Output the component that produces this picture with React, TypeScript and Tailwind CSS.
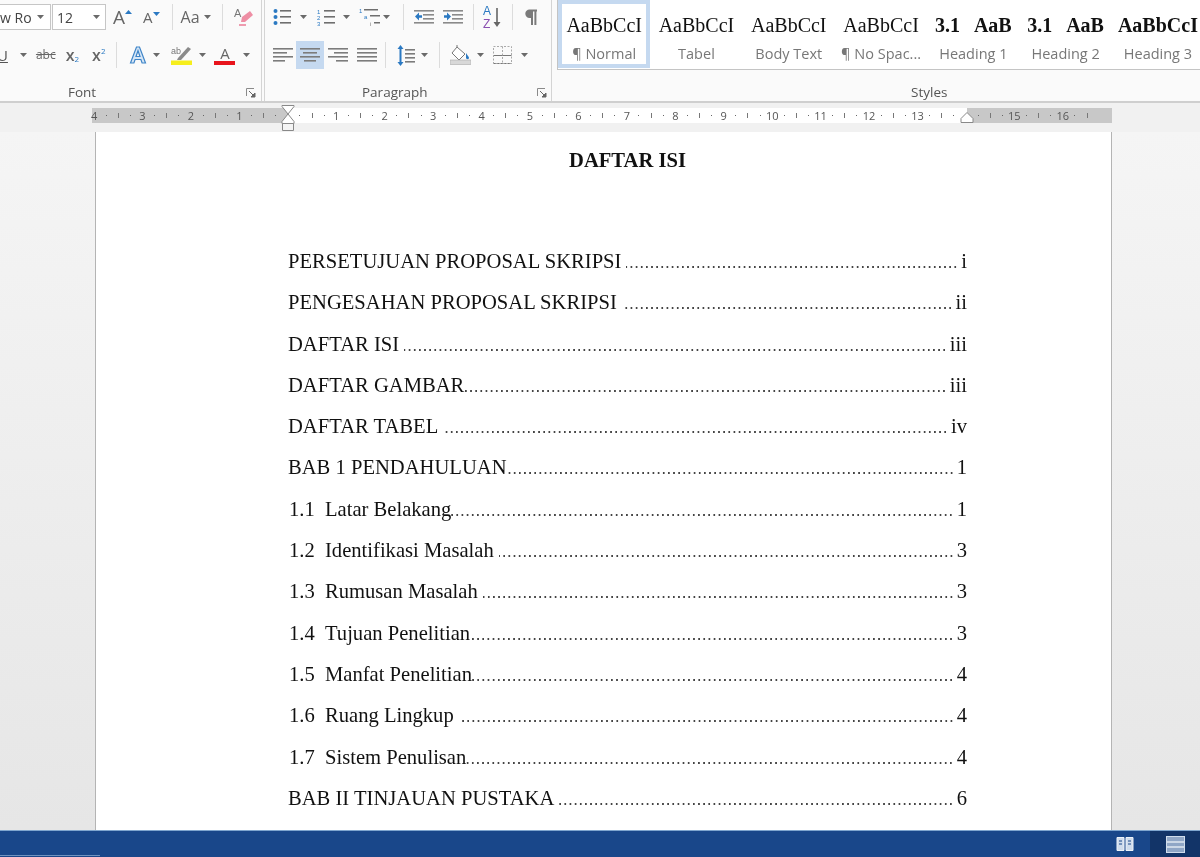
import type { ReactNode } from "react";

const Arrow = ({ className = "" }: { className?: string }) => (
  <svg width="7" height="4" viewBox="0 0 7 4" className={className}>
    <path d="M0 0h7L3.5 4z" fill="#6a6a6a" />
  </svg>
);

const Sep = ({ className = "" }: { className?: string }) => (
  <div className={`w-px h-[26px] bg-[#dcdcdc] ${className}`} />
);

const Lines = ({ rows }: { rows: number[][] }) => (
  <svg width="20" height="16" viewBox="0 0 20 16">
    {rows.map(([x, w], i) => (
      <rect key={i} x={x} y={1 + i * 4} width={w} height="1.6" fill="#7c7c7c" />
    ))}
  </svg>
);

const Launcher = () => (
  <svg width="10" height="10" viewBox="0 0 10 10">
    <path d="M.5 8V.5H8" fill="none" stroke="#8a8a8a" />
    <path d="M3 3l5 5M9 5v4H5z" fill="#666" stroke="#666" />
  </svg>
);

const Bullets = () => (
  <svg width="18" height="18" viewBox="0 0 18 18">
    {[3, 9, 15].map((y) => (
      <g key={y}>
        <circle cx="2.5" cy={y} r="2" fill="#2b79c2" />
        <rect x="7" y={y - 1} width="11" height="1.6" fill="#6f6f6f" />
      </g>
    ))}
  </svg>
);

const Numbering = () => (
  <svg width="18" height="18" viewBox="0 0 18 18">
    {[3, 9, 15].map((y, i) => (
      <g key={y}>
        <text x="0" y={y + 2.5} fontSize="6" fontFamily="Liberation Sans" fill="#2b79c2">
          {i + 1}
        </text>
        <rect x="7" y={y - 1} width="11" height="1.6" fill="#6f6f6f" />
      </g>
    ))}
  </svg>
);

const Multilevel = () => (
  <svg width="22" height="20" viewBox="0 0 22 20">
    <text x="0" y="6" fontSize="6" fontFamily="Liberation Sans" fill="#2b79c2">1</text>
    <rect x="5" y="2" width="14" height="1.5" fill="#6f6f6f" />
    <text x="5" y="12" fontSize="6" fontFamily="Liberation Sans" fill="#2b79c2">a</text>
    <rect x="11" y="8" width="10" height="1.5" fill="#6f6f6f" />
    <text x="11" y="19" fontSize="6" fontFamily="Liberation Sans" fill="#777">i</text>
    <rect x="15" y="15" width="6" height="1.5" fill="#6f6f6f" />
  </svg>
);

const Indent = ({ flip = false }: { flip?: boolean }) => (
  <svg width="20" height="16" viewBox="0 0 20 16">
    {[1, 5, 9, 13].map((y) => (
      <rect key={y} x={y === 1 || y === 13 ? 0 : 9} y={y} width={y === 1 || y === 13 ? 20 : 11} height="1.6" fill="#8a8a8a" />
    ))}
    {flip ? (
      <path d="M1 6.2h3V3.5l4 4-4 4V8.8H1z" fill="#2b79c2" />
    ) : (
      <path d="M8 6.2H5V3.5l-4 4 4 4V8.8h3z" fill="#2b79c2" />
    )}
  </svg>
);

const Sort = () => (
  <svg width="19" height="24" viewBox="0 0 19 24">
    <text x="0" y="10" fontSize="12" fontFamily="Liberation Sans" fill="#2b79c2">A</text>
    <text x="0" y="23" fontSize="12" fontFamily="Liberation Sans" fill="#8a4fb0">Z</text>
    <path d="M14 3v16" stroke="#666" strokeWidth="1.6" />
    <path d="M10.500 17h7L14 22z" fill="#666" />
  </svg>
);

const LineSpacing = () => (
  <svg width="18" height="21" viewBox="0 0 18 21">
    <path d="M3.5 0l3 4h-2v13h2l-3 4-3-4h2V4h-2z" fill="#2b79c2" />
    {[4, 8, 12, 16].map((y) => (
      <rect key={y} x="8" y={y} width="10" height="1.6" fill="#7c7c7c" />
    ))}
  </svg>
);

const Shading = () => (
  <svg width="21" height="20" viewBox="0 0 21 20">
    <path d="M7 2l8 7-6 6-7-7z" fill="#fff" stroke="#777" />
    <path d="M7 2V0" stroke="#777" />
    <path d="M16 8c2 3 3 4 3 5s-2 2-3 0z" fill="#2b79c2" />
    <rect x="0" y="15" width="21" height="4.5" fill="#d8d8d8" stroke="#aaa" strokeWidth=".6" />
  </svg>
);

const Borders = () => (
  <svg width="19" height="18" viewBox="0 0 19 18">
    <path d="M.5 9.5h18M.5 17.5h18" stroke="#777" />
    <path d="M.5.5h18v17H.5zM9.5.5v17" fill="none" stroke="#aaa" strokeDasharray="2 1.5" />
  </svg>
);

const Pilcrow = () => (
  <svg width="14" height="16" viewBox="0 0 14 16">
    <path d="M13 .5H5.500a4.200 4.200 0 0 0 0 8.400H7V16h2V2.400h1.400V16h2V2.400H13z" fill="#7a7a7a" />
  </svg>
);

const BigA = ({ size, up }: { size: string; up: boolean }) => (
  <div className="relative flex items-end">
    <span className={`font-['Open_Sans',sans-serif] leading-none text-[#666] ${size}`}>A</span>
    <svg width="7" height="4" viewBox="0 0 7 4" className="mb-auto mt-0.5">
      <path d={up ? "M0 4h7L3.5 0z" : "M0 0h7L3.5 4z"} fill="#2b79c2" />
    </svg>
  </div>
);

const Eraser = () => (
  <svg width="20" height="18" viewBox="0 0 20 18">
    <path d="M5 17h7" stroke="#e8728f" strokeWidth="1.4" />
    <path d="M8 9l8-6 3 4-8 7H7z" fill="#ee8ea4" />
    <text x="0" y="9" fontSize="11" fontFamily="Liberation Sans" fill="#777">A</text>
  </svg>
);

const TextEffect = () => (
  <svg width="18" height="18" viewBox="0 0 18 18">
    <path d="M1.500 17L7.500 1h3l6 16h-3.400l-1.200-3.500H6.100L4.900 17zM7 10.500h4L9 4.700z" fill="#d6e6f6" stroke="#3f85c8" strokeWidth="1.200" />
  </svg>
);

const Highlight = () => (
  <svg width="21" height="20" viewBox="0 0 21 20">
    <text x="0" y="9" fontSize="9" fontFamily="Liberation Sans" fill="#777">ab</text>
    <path d="M7 13l10-11 3 2-10 11H6z" fill="#8a8a8a" />
    <rect y="15.500" width="21" height="4.500" fill="#f6ee1c" />
  </svg>
);

const FontColor = () => (
  <div className="flex flex-col items-center w-[21px]">
    <span className="font-['Open_Sans',sans-serif] text-[15px] leading-[15px] text-[#666]">A</span>
    <div className="w-[21px] h-1 bg-[#e8141c]" />
  </div>
);

const Group = ({ className, label, labelClass, children }: { className: string; label: string; labelClass: string; children: ReactNode }) => (
  <section className={`relative h-full shrink-0 flex flex-col ${className}`}>
    {children}
    <div className={`absolute top-[84px] text-[13.5px] leading-4 text-[#555] font-['Open_Sans',sans-serif] ${labelClass}`}>{label}</div>
  </section>
);

const styleItems = [
  { preview: "AaBbCcI", label: "¶ Normal", bold: false },
  { preview: "AaBbCcI", label: "Tabel", bold: false },
  { preview: "AaBbCcI", label: "Body Text", bold: false },
  { preview: "AaBbCcI", label: "¶ No Spac...", bold: false },
  { preview: "3.1   AaB", label: "Heading 1", bold: true },
  { preview: "3.1   AaB", label: "Heading 2", bold: true },
  { preview: "AaBbCcI", label: "Heading 3", bold: true },
];

const Ribbon = () => (
  <header className="h-[101px] shrink-0 bg-[#fafafa] flex overflow-hidden">
    <Group className="w-[262px] border-r border-[#d4d4d4]" label="Font" labelClass="left-[68px]">
      <div className="flex items-center h-[26px] mt-1">
        <div className="w-[51px] h-[26px] border-y border-r border-[#c6c6c6] bg-white flex items-center overflow-hidden">
          <span className="font-['Open_Sans',sans-serif] text-[14px] text-[#444] whitespace-nowrap">w Ro</span>
          <Arrow className="ml-[5px] shrink-0" />
        </div>
        <div className="ml-px w-[54px] h-[26px] border border-[#c6c6c6] bg-white flex items-center pl-[4px]">
          <span className="font-['Open_Sans',sans-serif] text-[14px] text-[#444]">12</span>
          <Arrow className="ml-[20px]" />
        </div>
        <div className="ml-[7px]"><BigA size="text-[19px]" up /></div>
        <div className="ml-[11px]"><BigA size="text-[15px]" up={false} /></div>
        <Sep className="ml-[12px]" />
        <span className="ml-[8px] font-['Open_Sans',sans-serif] text-[16px] leading-none text-[#666]">Aa</span>
        <Arrow className="ml-[4px]" />
        <Sep className="ml-[11px]" />
        <div className="ml-[11px]"><Eraser /></div>
      </div>
      <div className="flex items-center h-[26px] mt-[12px]">
        <span className="-ml-[3px] font-['Open_Sans',sans-serif] text-[15px] leading-none underline text-[#555]">U</span>
        <Arrow className="ml-[12px]" />
        <span className="ml-[9px] font-['Open_Sans',sans-serif] text-[12px] line-through text-[#666]">abc</span>
        <span className="ml-[10px] font-['Open_Sans',sans-serif] text-[16px] font-semibold text-[#666]">x</span>
        <span className="font-['Open_Sans',sans-serif] text-[8px] mt-2 text-[#2b79c2]">2</span>
        <span className="ml-[13px] font-['Open_Sans',sans-serif] text-[16px] font-semibold text-[#666]">x</span>
        <span className="font-['Open_Sans',sans-serif] text-[8px] -mt-2 text-[#2b79c2]">2</span>
        <Sep className="ml-[11px]" />
        <div className="ml-[12px]"><TextEffect /></div>
        <Arrow className="ml-[6px]" />
        <div className="ml-[11px]"><Highlight /></div>
        <Arrow className="ml-[7px]" />
        <div className="ml-[8px]"><FontColor /></div>
        <Arrow className="ml-[8px]" />
      </div>
      <div className="absolute left-[246px] top-[88px]"><Launcher /></div>
    </Group>

    <Group className="ml-[2px] w-[288px] border-x border-[#d4d4d4]" label="Paragraph" labelClass="left-[97px]">
      <div className="flex items-center h-[26px] mt-1 pl-[8px]">
        <Bullets />
        <Arrow className="ml-[9px]" />
        <div className="ml-[10px]"><Numbering /></div>
        <Arrow className="ml-[8px]" />
        <div className="ml-[9px]"><Multilevel /></div>
        <Arrow className="ml-[2px]" />
        <Sep className="ml-[13px]" />
        <div className="ml-[10px]"><Indent /></div>
        <div className="ml-[9px]"><Indent flip /></div>
        <Sep className="ml-[10px]" />
        <div className="ml-[9px]"><Sort /></div>
        <Sep className="ml-[10px]" />
        <div className="ml-[11px]"><Pilcrow /></div>
      </div>
      <div className="flex items-center h-[28px] mt-[11px] pl-[8px]">
        <Lines rows={[[0, 20], [0, 14], [0, 20], [0, 12]]} />
        <div className="ml-[3px] w-[28px] h-[28px] bg-[#c5d9f0] flex items-center justify-center">
          <Lines rows={[[0, 20], [3, 14], [0, 20], [4, 12]]} />
        </div>
        <div className="ml-[4px]"><Lines rows={[[0, 20], [6, 14], [0, 20], [8, 12]]} /></div>
        <div className="ml-[9px]"><Lines rows={[[0, 20], [0, 20], [0, 20], [0, 20]]} /></div>
        <Sep className="ml-[8px]" />
        <div className="ml-[11px]"><LineSpacing /></div>
        <Arrow className="ml-[6px]" />
        <Sep className="ml-[11px]" />
        <div className="ml-[10px]"><Shading /></div>
        <Arrow className="ml-[6px]" />
        <div className="ml-[9px]"><Borders /></div>
        <Arrow className="ml-[9px]" />
      </div>
      <div className="absolute left-[272px] top-[88px]"><Launcher /></div>
    </Group>

    <Group className="flex-1 overflow-hidden" label="Styles" labelClass="left-[359px]">
      <div className="ml-[5px] h-[70px] border-b border-l border-[#c4c4c4] flex bg-white">
        {styleItems.map((s, i) => (
          <div
            key={s.label}
            className={
              i === 0
                ? "w-[92.3px] shrink-0 h-[68px] border-[4px] border-[#c5d9f0] flex flex-col items-center"
                : "w-[92.3px] shrink-0 h-[68px] border-[4px] border-transparent flex flex-col items-center"
            }
          >
            <span
              className={
                s.bold
                  ? "mt-[9px] font-['Liberation_Serif',serif] text-[20px] leading-6 font-bold text-[#111] whitespace-pre"
                  : "mt-[9px] font-['Liberation_Serif',serif] text-[20px] leading-6 text-[#111] whitespace-pre"
              }
            >
              {s.preview}
            </span>
            <span className="mt-[7px] font-['Open_Sans',sans-serif] text-[14.5px] leading-5 text-[#777] whitespace-nowrap">{s.label}</span>
          </div>
        ))}
      </div>
    </Group>
  </header>
);

const rulerCells: { text: string; kind: "num" | "dot" | "bar" }[] = [];
[4, 3, 2, 1, 0, 1, 2, 3, 4, 5, 6, 7, 8, 9, 10, 11, 12, 13, 14, 15, 16].forEach((n) => {
  rulerCells.push({ text: n === 0 || n === 14 ? "" : String(n), kind: "num" });
  rulerCells.push({ text: "", kind: "dot" });
  rulerCells.push({ text: "", kind: "bar" });
  rulerCells.push({ text: "", kind: "dot" });
});

const Ruler = () => (
  <div className="h-[31px] shrink-0 bg-[#f1f1f1] pt-[5px] pl-[92px] border-t-2 border-[#cfcfcf]">
    <div className="relative w-[1020px] h-[15px] bg-[#c8c8c8]">
      <div className="absolute left-[196px] top-0 h-full w-[679px] bg-white" />
      <div className="relative flex h-full -ml-[4px] overflow-visible">
        {rulerCells.slice(0, 83).map((c, i) => (
          <div key={i} className="w-[12.113px] shrink-0 flex items-center justify-center">
            {c.kind === "num" && <span className="font-['Open_Sans',sans-serif] text-[11px] leading-none text-[#555]">{c.text}</span>}
            {c.kind === "dot" && <span className="w-px h-px bg-[#666]" />}
            {c.kind === "bar" && <span className="w-px h-[5px] bg-[#777]" />}
          </div>
        ))}
      </div>
      <svg width="14" height="27" viewBox="0 0 14 27" className="absolute left-[189px] -top-[3px]">
        <path d="M1 .5h12v1L7 9 1 1.5zM7 9l6 7.5v2H1v-2z" fill="#fff" stroke="#888" />
        <path d="M1.500 18.500h11v7h-11z" fill="#f4f4f4" stroke="#888" />
      </svg>
      <svg width="14" height="11" viewBox="0 0 14 11" className="absolute left-[868px] top-[4px]">
        <path d="M7 .5l6 6v4H1v-4z" fill="#fff" stroke="#888" />
      </svg>
    </div>
  </div>
);

type Row = { text: string; num?: string; page: string; gap?: boolean };

const rows: Row[] = [
  { text: "PERSETUJUAN PROPOSAL SKRIPSI", page: "i", gap: true },
  { text: "PENGESAHAN PROPOSAL SKRIPSI", page: "ii", gap: true },
  { text: "DAFTAR ISI", page: "iii", gap: true },
  { text: "DAFTAR GAMBAR", page: "iii" },
  { text: "DAFTAR TABEL", page: "iv", gap: true },
  { text: "BAB 1 PENDAHULUAN", page: "1" },
  { num: "1.1", text: "Latar Belakang", page: "1" },
  { num: "1.2", text: "Identifikasi Masalah", page: "3", gap: true },
  { num: "1.3", text: "Rumusan Masalah", page: "3", gap: true },
  { num: "1.4", text: "Tujuan Penelitian", page: "3" },
  { num: "1.5", text: "Manfat Penelitian", page: "4" },
  { num: "1.6", text: "Ruang Lingkup", page: "4", gap: true },
  { num: "1.7", text: "Sistem Penulisan", page: "4" },
  { text: "BAB II TINJAUAN PUSTAKA", page: "6", gap: true },
];

const TocRow = ({ row }: { row: Row }) => (
  <div className="flex items-baseline pt-[8px] h-[41.3px] text-[20.6px] leading-[26px] text-[#111] whitespace-nowrap">
    {row.num && <span className="w-[37px] pl-[1px] shrink-0">{row.num}</span>}
    <span className="shrink-0">{row.text}</span>
    {/* dot leader, same pitch as a 12pt tab leader */}
    <span
      className={
        row.gap
          ? "flex-1 min-w-0 h-[2px] ml-[5px] mr-[3px] bg-[radial-gradient(circle,#444_0.9px,transparent_1.1px)] bg-[length:5.15px_2px] bg-repeat-x bg-right"
          : "flex-1 min-w-0 h-[2px] mr-[3px] bg-[radial-gradient(circle,#444_0.9px,transparent_1.1px)] bg-[length:5.15px_2px] bg-repeat-x bg-right"
      }
    />
    <span className="shrink-0">{row.page}</span>
  </div>
);

export default function App() {
  return (
    <div className="h-screen w-[1200px] flex flex-col overflow-hidden bg-[#e6e6e6] font-['Liberation_Serif',serif] blur-[0.35px]">
      <Ribbon />
      <Ruler />
      <main className="flex-1 min-h-0 overflow-hidden pl-[95px] bg-gradient-to-b from-[#f5f5f5] to-[#e6e6e6]">
        <div className="w-[1017px] h-full bg-white border-x border-[#b4b4b4] pl-[192px] pr-[144px] pt-[16px]">
          <h1 className="text-center font-bold text-[20.6px] leading-[24px] text-[#111]">DAFTAR ISI</h1>
          <div className="mt-[68px]">
            {rows.map((r) => (
              <TocRow key={r.text} row={r} />
            ))}
          </div>
        </div>
      </main>
      <footer className="relative h-[27px] shrink-0 bg-[#19478a] border-t border-[#7fa6cf] flex items-stretch justify-end">
        <div className="absolute left-0 bottom-px h-px w-[100px] bg-[#6f93c0]" />
        <div className="w-[50px] flex items-center justify-center">
          <svg width="18" height="16" viewBox="0 0 18 16">
            <path d="M1 1.500h7v13H1zM10 1.500h7v13h-7z" fill="#cfdcec" stroke="#eef3f9" />
            <path d="M3 5h3M3 8h3M12 5h3M12 8h3" stroke="#19478a" />
          </svg>
        </div>
        <div className="w-[50px] bg-[#123468] flex items-center justify-center">
          <svg width="19" height="17" viewBox="0 0 19 17">
            <rect x=".5" y=".5" width="18" height="16" fill="#8fa6c6" stroke="#cfdcec" />
            <path d="M1 6h17M1 11h17" stroke="#dfe7f1" strokeWidth="1.4" />
          </svg>
        </div>
      </footer>
    </div>
  );
}
